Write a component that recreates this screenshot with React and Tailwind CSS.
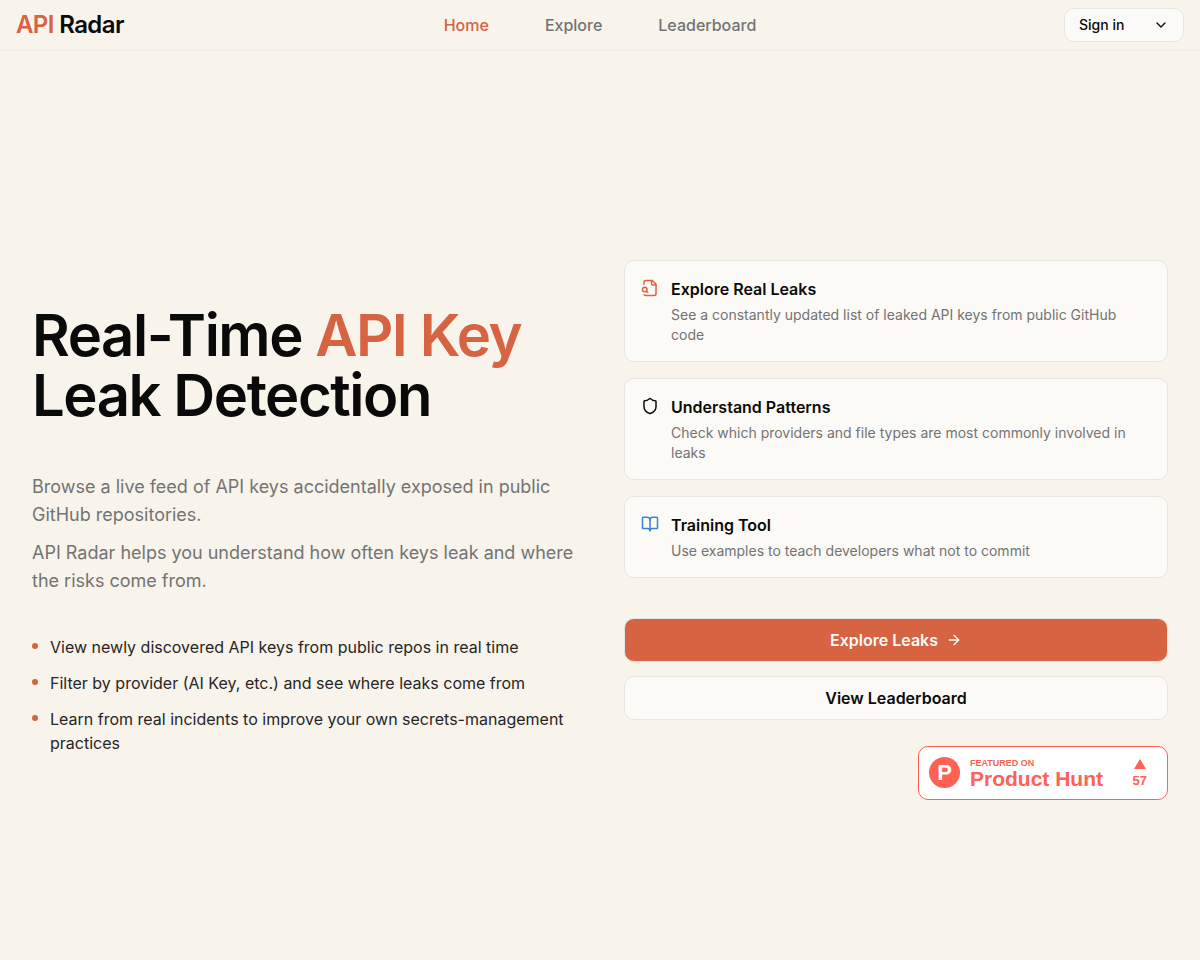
import { ArrowRight, BookOpen, ChevronDown, Shield } from "lucide-react";

const navLinks = [
  { label: "Home", href: "#home", active: true },
  { label: "Explore", href: "#explore" },
  { label: "Leaderboard", href: "#leaderboard" },
];

const highlights = [
  "View newly discovered API keys from public repos in real time",
  "Filter by provider (AI Key, etc.) and see where leaks come from",
  "Learn from real incidents to improve your own secrets-management practices",
];

const FileSearchIcon = ({ className }) => (
  <svg
    viewBox="0 0 24 24"
    fill="none"
    stroke="currentColor"
    strokeWidth="2"
    strokeLinecap="round"
    strokeLinejoin="round"
    className={className}
    aria-hidden="true"
  >
    <path d="M14 2v4a2 2 0 0 0 2 2h4" />
    <path d="M4.268 21a2 2 0 0 0 1.727 1H18a2 2 0 0 0 2-2V7l-5-5H6a2 2 0 0 0-2 2v3" />
    <path d="m9 18-1.5-1.5" />
    <circle cx="5" cy="14" r="3" />
  </svg>
);

const features = [
  {
    title: "Explore Real Leaks",
    description:
      "See a constantly updated list of leaked API keys from public GitHub code",
    icon: <FileSearchIcon className="size-[18px] text-[#d66443]" />,
  },
  {
    title: "Understand Patterns",
    description:
      "Check which providers and file types are most commonly involved in leaks",
    icon: <Shield className="size-[18px] text-[#0a0a0a]" />,
  },
  {
    title: "Training Tool",
    description: "Use examples to teach developers what not to commit",
    icon: <BookOpen className="size-[18px] text-[#3b82d6]" />,
  },
];

const Header = () => (
  <header className="sticky top-0 z-10 grid grid-cols-[1fr_auto_1fr] items-center border-b border-[#efebe5] bg-[#f8f3eb] px-4 py-2">
    <a href="#home" className="text-2xl leading-8 font-semibold tracking-tight">
      <span className="text-[#d66443]">API</span> Radar
    </a>
    <nav className="flex gap-14 font-medium">
      {navLinks.map((link) => (
        <a
          key={link.label}
          href={link.href}
          className={link.active ? "text-[#d66443]" : "text-[#737373]"}
        >
          {link.label}
        </a>
      ))}
    </nav>
    <button
      type="button"
      className="flex h-[34px] w-[120px] items-center justify-between justify-self-end rounded-[10px] border border-[#e8e6e3] bg-[#fcfaf6] px-3.5 text-sm font-medium"
    >
      Sign in
      <ChevronDown className="size-4" />
    </button>
  </header>
);

const FeatureCard = ({ title, description, icon }) => (
  <div className="flex gap-3 rounded-[10px] border border-[#e8e6e3] bg-[#fcfaf6] p-4">
    <div className="shrink-0 pt-0.5">{icon}</div>
    <div>
      <h3 className="text-base font-semibold">{title}</h3>
      <p className="mt-1 text-sm text-[#737373]">{description}</p>
    </div>
  </div>
);

const ProductHuntBadge = () => (
  <a
    href="#product-hunt"
    className="flex h-[54px] w-[250px] items-center self-end rounded-[10px] border border-[#ff6154] bg-white pr-5 pl-2.5 font-['Liberation_Sans',Arial,sans-serif] font-bold text-[#ff6154]"
  >
    <span className="flex size-[31px] items-center justify-center rounded-full bg-[#ff6154] text-[22px] leading-6 text-white">
      P
    </span>
    <span className="ml-2.5 flex flex-col pt-0.5">
      <span className="text-[9px] leading-[10px]">FEATURED ON</span>
      <span className="text-[21px] leading-[22px]">Product Hunt</span>
    </span>
    <span className="ml-auto flex flex-col items-center gap-1 pt-0.5">
      <svg viewBox="0 0 12 10" className="h-2.5 w-3" aria-hidden="true">
        <path d="M6 0l6 10H0z" fill="#ff6154" />
      </svg>
      <span className="text-[13px] leading-4">57</span>
    </span>
  </a>
);

export default function App() {
  return (
    <div className="flex min-h-screen flex-col bg-[#f8f3eb] font-[Inter,sans-serif] text-[#0a0a0a]">
      <Header />
      <main className="grid flex-1 grid-cols-1 items-center gap-12 px-8 pt-12 md:grid-cols-2">
        <section>
          <h1 className="text-[58px] leading-[60px] font-semibold tracking-tight">
            Real-Time <span className="text-[#d66443]">API Key</span>
            <br />
            Leak Detection
          </h1>
          <div className="mt-12 space-y-2.5 text-lg text-[#737373]">
            <p>
              Browse a live feed of API keys accidentally exposed in public
              GitHub repositories.
            </p>
            <p>
              API Radar helps you understand how often keys leak and where the
              risks come from.
            </p>
          </div>
          <ul className="mt-10 space-y-3 text-[#262626]">
            {highlights.map((text) => (
              <li key={text} className="flex gap-3">
                <span className="mt-2 size-1.5 shrink-0 rounded-full bg-[#d66443]" />
                {text}
              </li>
            ))}
          </ul>
        </section>

        <section className="flex flex-col">
          <div className="flex flex-col gap-4">
            {features.map((feature) => (
              <FeatureCard key={feature.title} {...feature} />
            ))}
          </div>
          <div className="mt-10 mb-[26px] flex flex-col gap-3.5 font-semibold">
            <a
              href="#explore"
              className="flex h-11 items-center justify-center gap-2 rounded-[10px] border border-[#e8e6e3] bg-[#d66443] text-[#fcfaf6]"
            >
              Explore Leaks
              <ArrowRight className="size-4" />
            </a>
            <a
              href="#leaderboard"
              className="flex h-11 items-center justify-center rounded-[10px] border border-[#e8e6e3] bg-[#fcfaf6]"
            >
              View Leaderboard
            </a>
          </div>
          <ProductHuntBadge />
        </section>
      </main>
    </div>
  );
}
